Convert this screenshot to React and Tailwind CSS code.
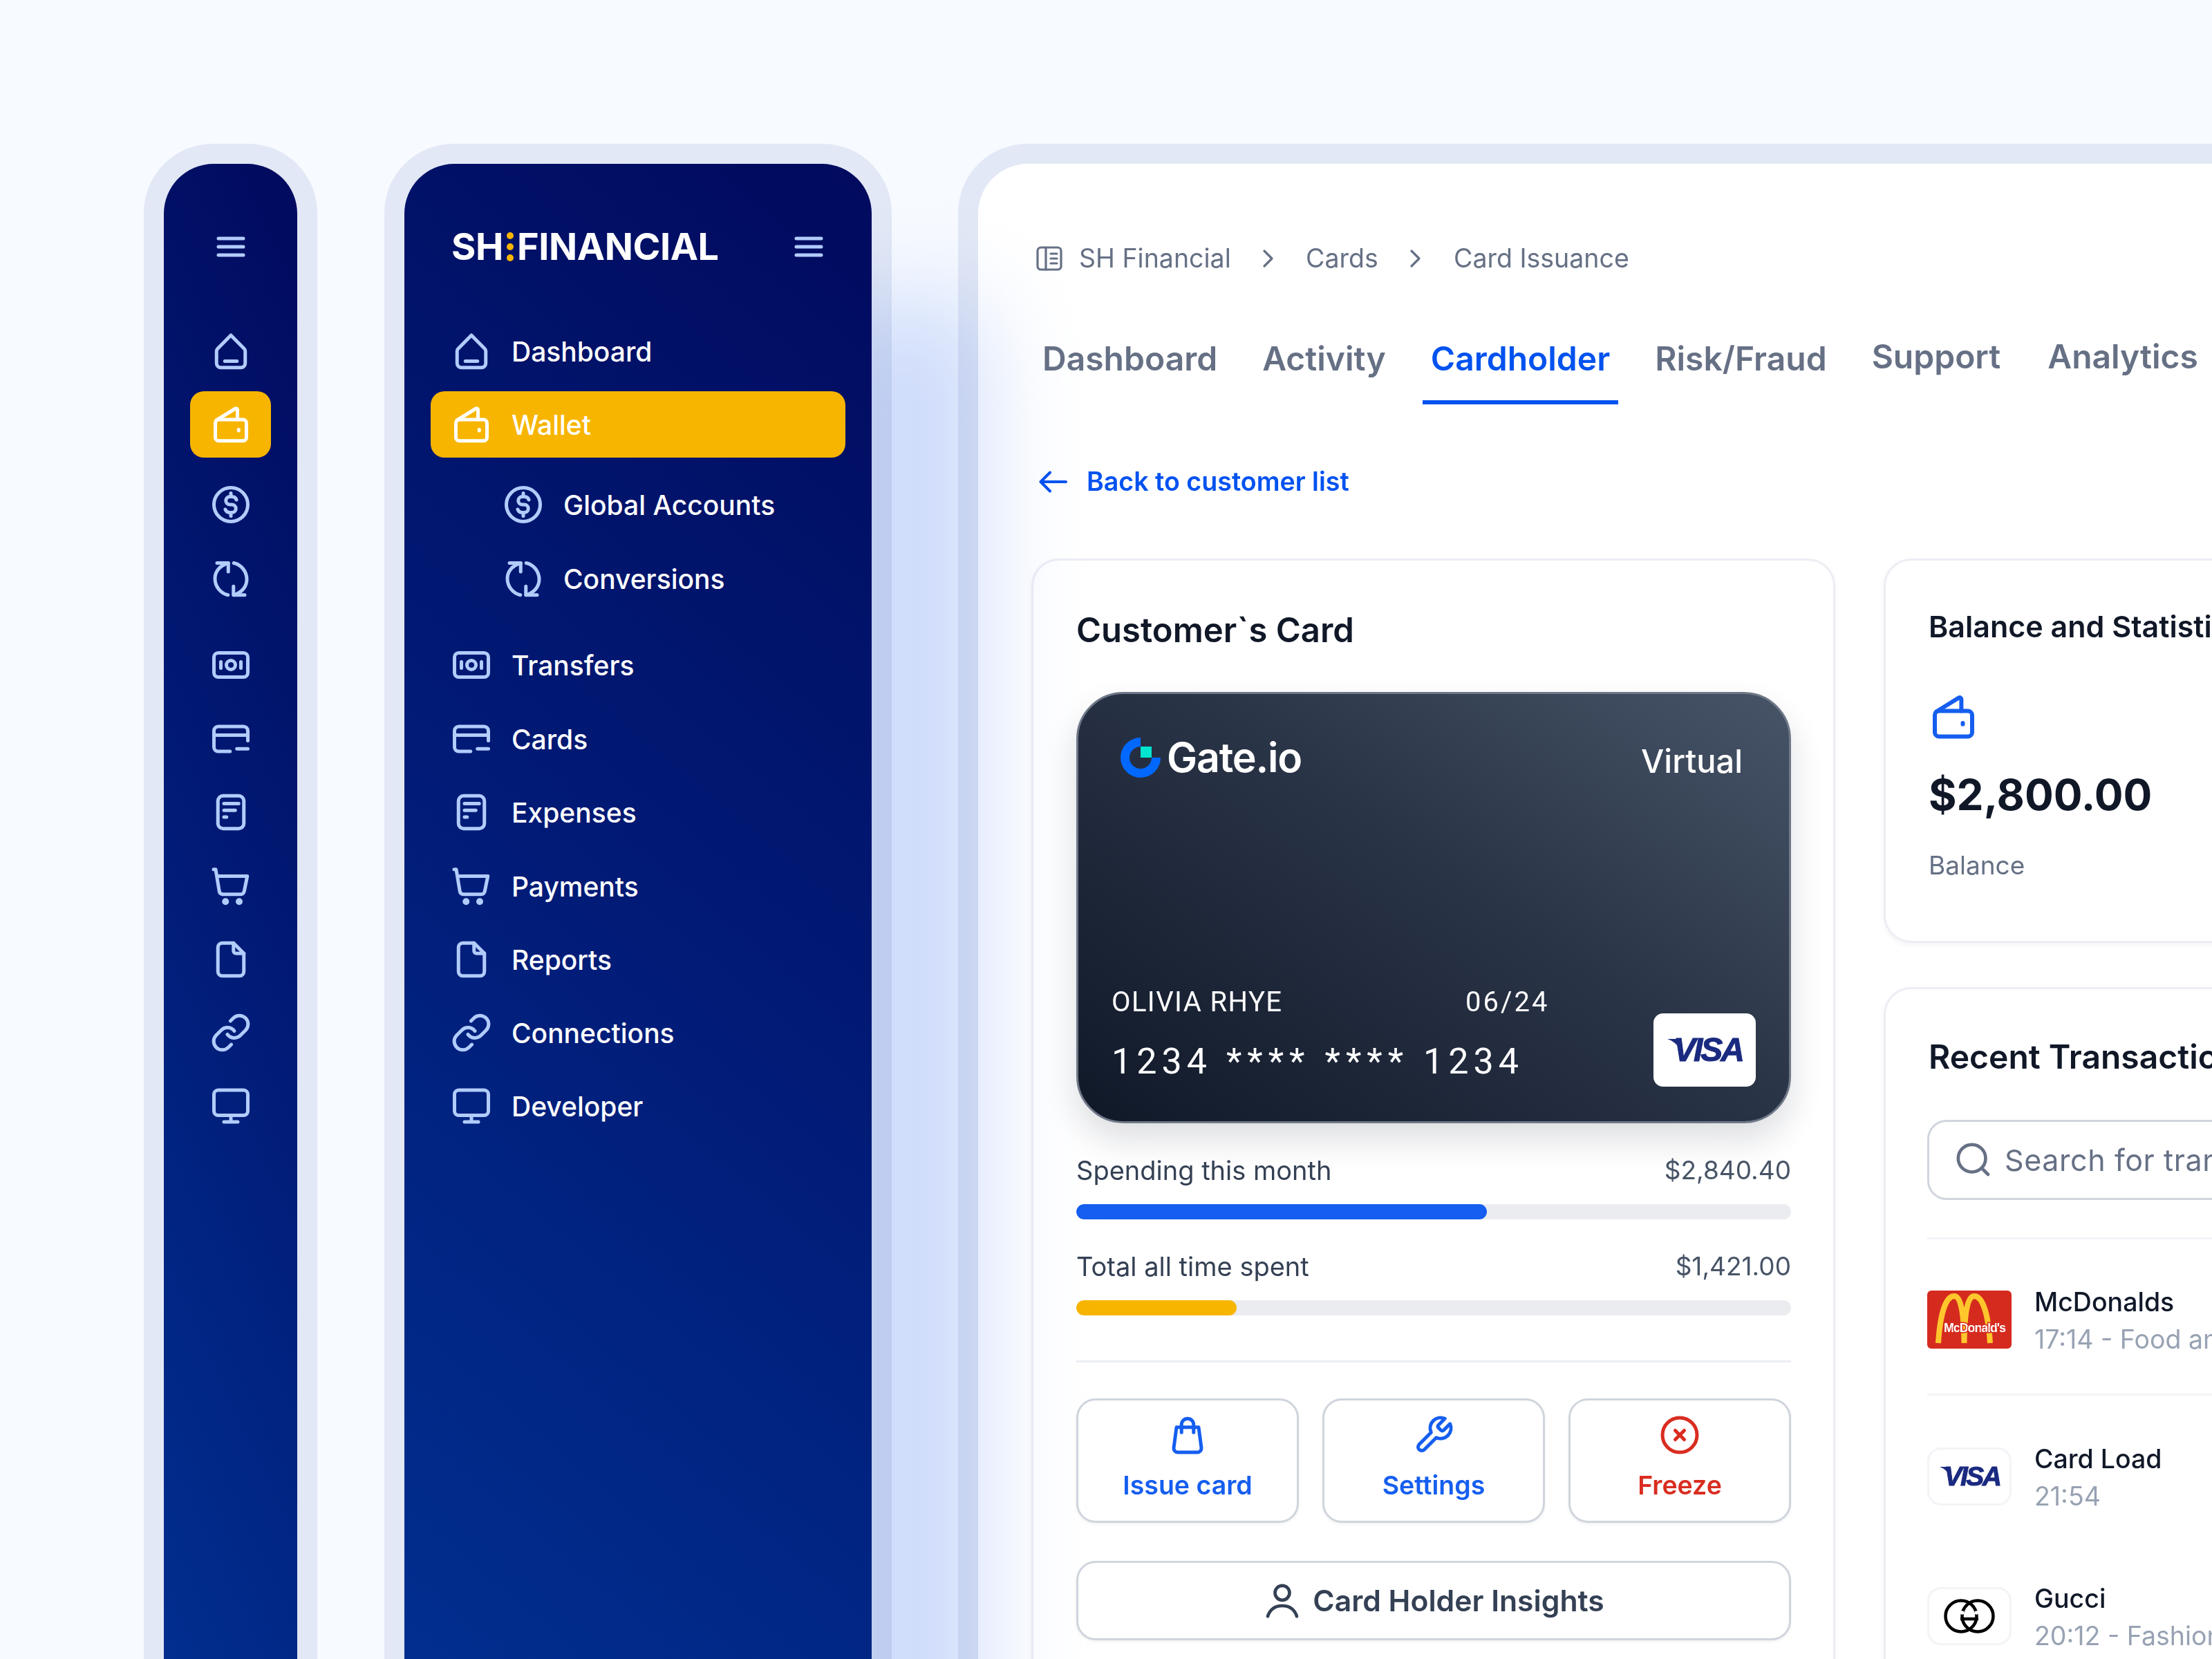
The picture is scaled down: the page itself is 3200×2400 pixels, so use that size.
import React from "react";

const Svg = ({ className = "w-[60px] h-[60px]", children, sw = 2 }) => (
  <svg viewBox="0 0 24 24" fill="none" stroke="currentColor" strokeWidth={sw} strokeLinecap="round" strokeLinejoin="round" className={className + " shrink-0"}>
    {children}
  </svg>
);

const Home = (p) => (<Svg {...p}><path d="M12 2.8 4.3 10.6a2 2 0 0 0-.6 1.4V19a2.5 2.5 0 0 0 2.5 2.5h11.6a2.5 2.5 0 0 0 2.5-2.5v-7a2 2 0 0 0-.6-1.4L12 2.8Z" /><path d="M8.5 17.8h7" /></Svg>);
const Wallet = (p) => (<Svg {...p}><rect x="3" y="9.2" width="18" height="12.3" rx="2" /><path d="M3.6 9.6 14.6 2.8c.6-.3 1.2.1 1.2.7v5.7" /><path d="M16.5 15v.6" /></Svg>);
const Dollar = (p) => (<Svg {...p}><circle cx="12" cy="12" r="9.8" /><path d="M15.2 9.2A2.6 2.6 0 0 0 12.8 7.4h-1.4a2.3 2.3 0 0 0 0 4.6h1.2a2.3 2.3 0 0 1 0 4.6h-1.4a2.6 2.6 0 0 1-2.4-1.8M12 5.4v2M12 16.6v2" /></Svg>);
const Convert = (p) => (<Svg {...p}><path d="M4 3h6.5v5" /><path d="M10.5 3C5.5 4.5 2.8 8 2.8 12c0 4.4 3 8.5 7.5 9.5" /><path d="M13.7 3c4.5 1 7.5 5 7.5 9.5 0 4-2.7 7.5-7.5 9" /><path d="M20 21.5h-6.5v-5" /></Svg>);
const Money = (p) => (<Svg {...p}><rect x="2.2" y="5" width="19.6" height="14" rx="2.5" /><circle cx="12" cy="12" r="2.6" /><path d="M6.2 10.2v3.6M17.8 10.2v3.6" /></Svg>);
const Card = (p) => (<Svg {...p}><path d="M21.8 13V7.3a2.5 2.5 0 0 0-2.5-2.5H4.7a2.5 2.5 0 0 0-2.5 2.5v9.4a2.5 2.5 0 0 0 2.5 2.5h6.8" /><path d="M2.2 9.8h19.6" /><path d="M15.5 17.7h6.3" /></Svg>);
const Doc = (p) => (<Svg {...p}><rect x="4.5" y="2.5" width="15" height="19" rx="3" /><path d="M8 7h8.5M8 10.9h6.5M8 14.8h1.5" /></Svg>);
const Cart = (p) => (<Svg {...p}><path d="M2 2.3h1.2L5.3 15a2 2 0 0 0 2 1.7h10.4a2 2 0 0 0 2-1.7L21.5 6.2H4" /><circle cx="8.9" cy="20.9" r="1" fill="currentColor" /><circle cx="16.8" cy="20.9" r="1" fill="currentColor" /></Svg>);
const File = (p) => (<Svg {...p}><path d="M13.5 2.5H7A2.5 2.5 0 0 0 4.5 5v14A2.5 2.5 0 0 0 7 21.5h10a2.5 2.5 0 0 0 2.5-2.5V8.5l-6-6Z" /><path d="M13.5 2.5V7A1.5 1.5 0 0 0 15 8.5h4.5" /></Svg>);
const Link = (p) => (<Svg {...p}><path d="M10 13a5 5 0 0 0 7.54.54l3-3a5 5 0 0 0-7.07-7.07l-1.72 1.71" /><path d="M14 11a5 5 0 0 0-7.54-.54l-3 3a5 5 0 0 0 7.07 7.07l1.71-1.71" /></Svg>);
const Monitor = (p) => (<Svg {...p}><rect x="2.2" y="2.8" width="19.6" height="14.6" rx="2.5" /><path d="M12 17.5v3.7M8 21.2h8" /></Svg>);
const Bag = (p) => (<Svg {...p}><path d="M5.6 7.5h12.8l1.6 12a2.3 2.3 0 0 1-2.3 2.5H6.3A2.3 2.3 0 0 1 4 19.5l1.6-12Z" /><path d="M8.5 10.5V6a3.5 3.5 0 0 1 7 0v4.5" /></Svg>);
const Wrench = (p) => (<Svg {...p}><path d="M14.7 6.3a1 1 0 0 0 0 1.4l1.6 1.6a1 1 0 0 0 1.4 0l3.77-3.77a6 6 0 0 1-7.94 7.94l-6.91 6.91a2.12 2.12 0 0 1-3-3l6.91-6.91a6 6 0 0 1 7.94-7.94l-3.76 3.76Z" /></Svg>);
const XCircle = (p) => (<Svg {...p}><circle cx="12" cy="12" r="10" /><path d="m14.6 9.4-5.2 5.2M9.4 9.4l5.2 5.2" /></Svg>);
const User = (p) => (<Svg {...p}><circle cx="12" cy="7" r="4.5" /><path d="M3 21.5c1.5-4.5 5-6.5 9-6.5s7.5 2 9 6.5" /></Svg>);
const Search = (p) => (<Svg {...p}><circle cx="11" cy="11" r="8.5" /><path d="m21 21-3.8-3.8" /></Svg>);

const Burger = () => (
  <svg viewBox="0 0 48 48" fill="none" stroke="currentColor" strokeWidth="5" strokeLinecap="round" className="w-[48px] h-[48px] text-[#b2ccfb] shrink-0">
    <path d="M6 12h36M6 24h36M6 36h36" />
  </svg>
);

const nav = [
  { icon: Home, label: "Dashboard", cls: "" },
  { icon: Wallet, label: "Wallet", active: true, cls: "" },
  { icon: Dollar, label: "Global Accounts", sub: true, cls: "mt-[10px]" },
  { icon: Convert, label: "Conversions", sub: true, cls: "mt-px" },
  { icon: Money, label: "Transfers", cls: "mt-[19px]" },
  { icon: Card, label: "Cards", cls: "mt-px" },
  { icon: Doc, label: "Expenses", cls: "" },
  { icon: Cart, label: "Payments", cls: "mt-px" },
  { icon: File, label: "Reports", cls: "" },
  { icon: Link, label: "Connections", cls: "" },
  { icon: Monitor, label: "Developer", cls: "" },
];

const Frame = ({ className, children }) => (
  <div className={"shrink-0 h-[2400px] bg-[#e2e8f5] p-[29px] rounded-[100px] " + className}>{children}</div>
);

const Collapsed = () => (
  <Frame className="w-[251px]">
    <div className="h-full rounded-[72px] bg-[linear-gradient(245deg,#010a5e_0%,#011a75_45%,#013193_100%)] px-[38px] pt-[96px] flex flex-col items-stretch">
      <div className="flex justify-center"><Burger /></div>
      <div className="mt-[79px] flex flex-col gap-[10px]">
        {nav.map((n) => (
          <div key={n.label} className={"h-[96px] flex items-center justify-center rounded-[20px] " + n.cls + (n.active ? " bg-[#f7b500] text-white" : " text-[#b2ccfb]")}>
            <n.icon />
          </div>
        ))}
      </div>
    </div>
  </Frame>
);

const Expanded = () => (
  <Frame className="w-[734px] ml-[97px]">
    <div className="relative z-10 h-full rounded-[72px] bg-[linear-gradient(220deg,#010a5e_0%,#011a75_45%,#013193_100%)] px-[38px] pt-[96px] flex flex-col">
      <div className="h-[48px] flex items-center justify-between pl-[30px] pr-[29px]">
        <div className="flex items-center text-white text-[54px] leading-[48px] font-bold tracking-[-0.4px]">
          <span>SH</span>
          <span className="flex flex-col gap-[6px] mx-[5px]">
            <span className="block w-[10px] h-[10px] rounded-full bg-[#f7b500]" />
            <span className="block w-[10px] h-[10px] rounded-full bg-[#f7b500]" />
            <span className="block w-[10px] h-[10px] rounded-full bg-[#f7b500]" />
          </span>
          <span>FINANCIAL</span>
        </div>
        <Burger />
      </div>
      <div className="mt-[79px] flex flex-col gap-[10px]">
        {nav.map((n) => (
          <div key={n.label} className={"h-[96px] flex items-center gap-[28px] rounded-[20px] text-[39px] font-medium text-white " + n.cls + (n.sub ? " pl-[104px]" : " pl-[29px]") + (n.active ? " bg-[#f7b500]" : "")}>
            <span className={n.active ? "text-white" : "text-[#b2ccfb]"}><n.icon /></span>
            <span className="leading-[50px] translate-y-px">{n.label}</span>
          </div>
        ))}
      </div>
    </div>
  </Frame>
);

const Chevron = () => (
  <svg viewBox="0 0 18 28" fill="none" stroke="currentColor" strokeWidth="3.2" strokeLinecap="round" strokeLinejoin="round" className="w-[18px] h-[28px] text-[#667085]">
    <path d="M3 3l11 11L3 25" />
  </svg>
);

const Tab = ({ children, active, up, cls = "" }) => (
  <div className={"px-[12px] pb-[30px] border-b-[6px] text-[48px] leading-[60px] font-semibold whitespace-nowrap " + cls + " " + (active ? "border-[#0052ef] text-[#0052ef]" : "border-transparent text-[#667085]") + (up ? " -translate-y-[3px]" : "")}>
    {children}
  </div>
);

const Stat = ({ label, value, pct, color, cls }) => (
  <div className={cls}>
    <div className="flex justify-between items-center leading-[48px] -translate-y-[2px]">
      <span className="text-[38px] text-[#344054]">{label}</span>
      <span className="text-[37px] text-[#475467]">{value}</span>
    </div>
    <div className="mt-[23px] h-[22px] rounded-full bg-[#eaecf0] overflow-hidden">
      <div className={"h-full rounded-full " + color} style={{ width: pct + "%" }} />
    </div>
  </div>
);

const ActionBtn = ({ icon: I, label, color }) => (
  <div className={"h-[180px] rounded-[28px] border-[3px] border-[#d0d5dd] bg-white shadow-[0_2px_4px_rgba(16,24,40,0.06)] flex flex-col items-center pt-[20px] " + color}>
    <I />
    <span className="mt-[18px] text-[37.5px] leading-[50px] font-semibold">{label}</span>
  </div>
);

const GateLogo = () => (
  <svg viewBox="0 0 58 60" className="w-[58px] h-[60px] shrink-0">
    <path d="M29 1A29 29 0 1 0 58 30H45A16 16 0 1 1 29 14Z" fill="#0068ff" />
    <rect x="29" y="14" width="16" height="16" fill="#00e5d0" />
  </svg>
);

const VisaText = ({ size, tail }) => (
  <span className="inline-flex items-start">
    <svg viewBox="0 0 20 20" className={tail + " shrink-0"}><path d="M0 0h17l3 18C16 9 9 3 0 0Z" fill="#1a2a80" /></svg>
    <span className={"italic font-bold text-[#1a2a80] [-webkit-text-stroke:1px_#1a2a80] [font-family:'Liberation_Sans',sans-serif] " + size}>VISA</span>
  </span>
);

const CreditCard = () => (
  <div className="mt-[59px] w-[1034px] h-[624px] rounded-[68px] border-[3px] border-[#6f7888] bg-[linear-gradient(35deg,#101828_0%,#2a3447_55%,#475467_100%)] shadow-[0_24px_48px_rgba(16,24,40,0.14)] flex flex-col text-white">
    <div className="pl-[61px] pr-[67px] pt-[62px] flex justify-between items-start">
      <div className="flex items-center gap-[9px]">
        <GateLogo />
        <span className="text-[59px] leading-[60px] font-semibold tracking-[-1.2px]">Gate.io</span>
      </div>
      <span className="text-[47px] leading-[60px] font-medium mt-[5px]">Virtual</span>
    </div>
    <div className="flex-1 pl-[48px] pr-[48px] pb-[50px] flex justify-between items-end [font-family:Roboto,sans-serif]">
      <div className="pb-[6px]">
        <div className="flex text-[40px] leading-[50px] tracking-[1.4px]">
          <span className="w-[512px]">OLIVIA RHYE</span>
          <span className="tracking-[3px]">06/24</span>
        </div>
        <div className="mt-[31px] flex gap-[21px] text-[52px] leading-[60px]">
          <span className="tracking-[7px]">1234</span>
          <span className="tracking-[8px]">****</span>
          <span className="tracking-[8px]">****</span>
          <span className="tracking-[7px]">1234</span>
        </div>
      </div>
      <div className="w-[148px] h-[106px] rounded-[14px] bg-white flex items-center justify-center">
        <VisaText size="text-[48px] leading-[50px] tracking-[-3px]" tail="w-[22px] h-[20px] -mr-[12px] mt-[9px]" />
      </div>
    </div>
  </div>
);

const LeftCard = () => (
  <div className="w-[1163px] shrink-0 rounded-[40px] border-[3px] border-[#eceef4] bg-white shadow-[0_3px_8px_rgba(16,24,40,0.05)] pl-[62px] pr-[61px] pt-[71px]">
    <div className="text-[49px] leading-[60px] font-semibold text-[#101828]">Customer`s Card</div>
    <CreditCard />
    <Stat cls="mt-[46px]" label="Spending this month" value="$2,840.40" pct="57.4" color="bg-[#155eef]" />
    <Stat cls="mt-[46px]" label="Total all time spent" value="$1,421.00" pct="22.4" color="bg-[#f7b500]" />
    <div className="mt-[65px] h-[3px] bg-[#eceef4]" />
    <div className="mt-[52px] grid grid-cols-3 gap-[34px]">
      <ActionBtn icon={Bag} label="Issue card" color="text-[#155eef]" />
      <ActionBtn icon={Wrench} label="Settings" color="text-[#155eef]" />
      <ActionBtn icon={XCircle} label="Freeze" color="text-[#d92d20]" />
    </div>
    <div className="mt-[55px] h-[115px] rounded-[28px] border-[3px] border-[#d0d5dd] bg-white shadow-[0_2px_4px_rgba(16,24,40,0.06)] flex items-center justify-center gap-[16px] text-[#344054]">
      <User className="w-[56px] h-[56px]" />
      <span className="text-[42.7px] leading-[56px] font-semibold">Card Holder Insights</span>
    </div>
    <div className="h-[120px]" />
  </div>
);

const McD = () => (
  <svg viewBox="0 0 122 84" className="w-[122px] h-[84px] shrink-0">
    <rect width="122" height="84" rx="6" fill="#d52b1e" />
    <path d="M16 76C19 30 28 8 39 8c10 0 14 26 14.500 68M53.500 76C54 34 58 8 68 8c11 0 20 22 23 68" fill="none" stroke="#ffc72c" strokeWidth="8" />
    <text x="24" y="60" fill="#fff" fontSize="18" fontWeight="800" fontFamily="Liberation Sans, sans-serif" stroke="#d52b1e" strokeWidth="3" paintOrder="stroke" textLength="90">McDonald's</text>
  </svg>
);

const Gucci = () => (
  <svg viewBox="0 0 74 50" fill="none" stroke="#000" strokeWidth="4.500" className="w-[74px] h-[50px]">
    <circle cx="25" cy="25" r="22.500" />
    <circle cx="49" cy="25" r="22.500" />
    <circle cx="47.200" cy="20" r="2.800" fill="#fff" stroke="none" />
    <circle cx="26.800" cy="20" r="2.800" fill="#fff" stroke="none" />
    <path d="M24 29h26" />
  </svg>
);

const Row = ({ logo, title, sub, cls }) => (
  <div className={"h-[84px] flex items-center gap-[33px] " + cls}>
    {logo}
    <div className="whitespace-nowrap translate-y-[2px]">
      <div className="text-[37.5px] leading-[54px] font-medium text-[#101828]">{title}</div>
      <div className="text-[37.5px] leading-[54px] text-[#98a2b3]">{sub}</div>
    </div>
  </div>
);

const LogoBox = ({ children }) => (
  <div className="w-[122px] h-[84px] shrink-0 rounded-[20px] border-[3px] border-[#f2f4f7] bg-white flex items-center justify-center overflow-hidden">{children}</div>
);

const RightCol = () => (
  <div className="ml-[70px] w-[1200px] shrink-0 flex flex-col gap-[64px]">
    <div className="h-[556px] rounded-[40px] border-[3px] border-[#eceef4] bg-white shadow-[0_3px_8px_rgba(16,24,40,0.05)] pl-[62px] pt-[69px]">
      <div className="text-[43px] leading-[52px] font-semibold text-[#101828]">Balance and Statistics</div>
      <div className="mt-[69px] text-[#155eef]"><Wallet className="w-[72px] h-[72px]" /></div>
      <div className="mt-[37px] text-[62px] leading-[80px] font-bold text-[#101828]">$2,800.00</div>
      <div className="mt-[38px] text-[37px] leading-[48px] text-[#667085]">Balance</div>
    </div>
    <div className="rounded-[40px] border-[3px] border-[#eceef4] bg-white shadow-[0_3px_8px_rgba(16,24,40,0.05)] pl-[60px] pt-[68px] h-[1100px]">
      <div className="pl-[2px] text-[48px] leading-[60px] font-semibold text-[#101828]">Recent Transactions</div>
      <div className="mt-[61px] h-[116px] rounded-[28px] border-[3px] border-[#d0d5dd] flex items-center pl-[36px] gap-[17px] text-[#667085]">
        <Search className="w-[56px] h-[56px]" />
        <span className="text-[43px] leading-[56px] whitespace-nowrap tracking-[0.6px]">Search for transactions</span>
      </div>
      <div className="mt-[54px] h-[3px] bg-[#f2f4f7]" />
      <Row cls="mt-[74px]" logo={<McD />} title="McDonalds" sub="17:14 - Food and Drink" />
      <div className="mt-[65px] h-[3px] bg-[#f2f4f7]" />
      <Row cls="mt-[75px]" logo={<LogoBox><VisaText size="text-[39px] leading-[40px] tracking-[-2.5px]" tail="w-[18px] h-[14px] -mr-[10px] mt-[6px]" /></LogoBox>} title="Card Load" sub="21:54" />
      <Row cls="mt-[118px]" logo={<LogoBox><Gucci /></LogoBox>} title="Gucci" sub="20:12 - Fashion" />
    </div>
  </div>
);

const Main = () => (
  <Frame className="w-[2200px] ml-[96px]">
    <div className="h-full rounded-[72px] bg-white pl-[77px] pt-[117px]">
      <div className="ml-[7px] h-[40px] flex items-center text-[37.5px] leading-[40px] text-[#667085]">
        <svg viewBox="0 0 38 36" fill="none" stroke="currentColor" strokeWidth="3.2" strokeLinecap="round" strokeLinejoin="round" className="w-[38px] h-[36px]">
          <rect x="2" y="2" width="34" height="32" rx="5" />
          <path d="M14 2v32M21 11h9M21 18h9M21 25h9" />
        </svg>
        <span className="ml-[24px] w-[220px]">SH Financial</span>
        <span className="ml-[45px]"><Chevron /></span>
        <span className="ml-[45px] w-[105px]">Cards</span>
        <span className="ml-[45px]"><Chevron /></span>
        <span className="ml-[46px] whitespace-nowrap">Card Issuance</span>
      </div>
      <div className="ml-[4px] mt-[95px] flex gap-[41px]">
        <Tab>Dashboard</Tab>
        <Tab>Activity</Tab>
        <Tab active>Cardholder</Tab>
        <Tab>Risk/Fraud</Tab>
        <Tab up>Support</Tab>
        <Tab up cls="ml-[3px]">Analytics</Tab>
      </div>
      <div className="ml-[11px] mt-[90px] h-[44px] flex items-center gap-[27px] text-[#0052ef]">
        <svg viewBox="0 0 42 32" fill="none" stroke="currentColor" strokeWidth="4" strokeLinecap="round" strokeLinejoin="round" className="w-[42px] h-[32px]">
          <path d="M39 16H3M16 2.500 2.500 16 16 29.500" />
        </svg>
        <span className="text-[37.6px] leading-[44px] font-semibold">Back to customer list</span>
      </div>
      <div className="mt-[89px] flex items-start">
        <LeftCard />
        <RightCol />
      </div>
    </div>
  </Frame>
);

export default function App() {
  return (
    <div className="relative w-[3200px] h-[2400px] overflow-hidden bg-[#f7faff] pt-[208px] pl-[208px] flex [font-family:Inter,sans-serif]">
      <Collapsed />
      <Expanded />
      <Main />
      <div className="absolute left-[1190px] top-[440px] w-[235px] h-[2400px] blur-[70px] bg-[#d3dffa] mix-blend-multiply pointer-events-none" />
    </div>
  );
}
